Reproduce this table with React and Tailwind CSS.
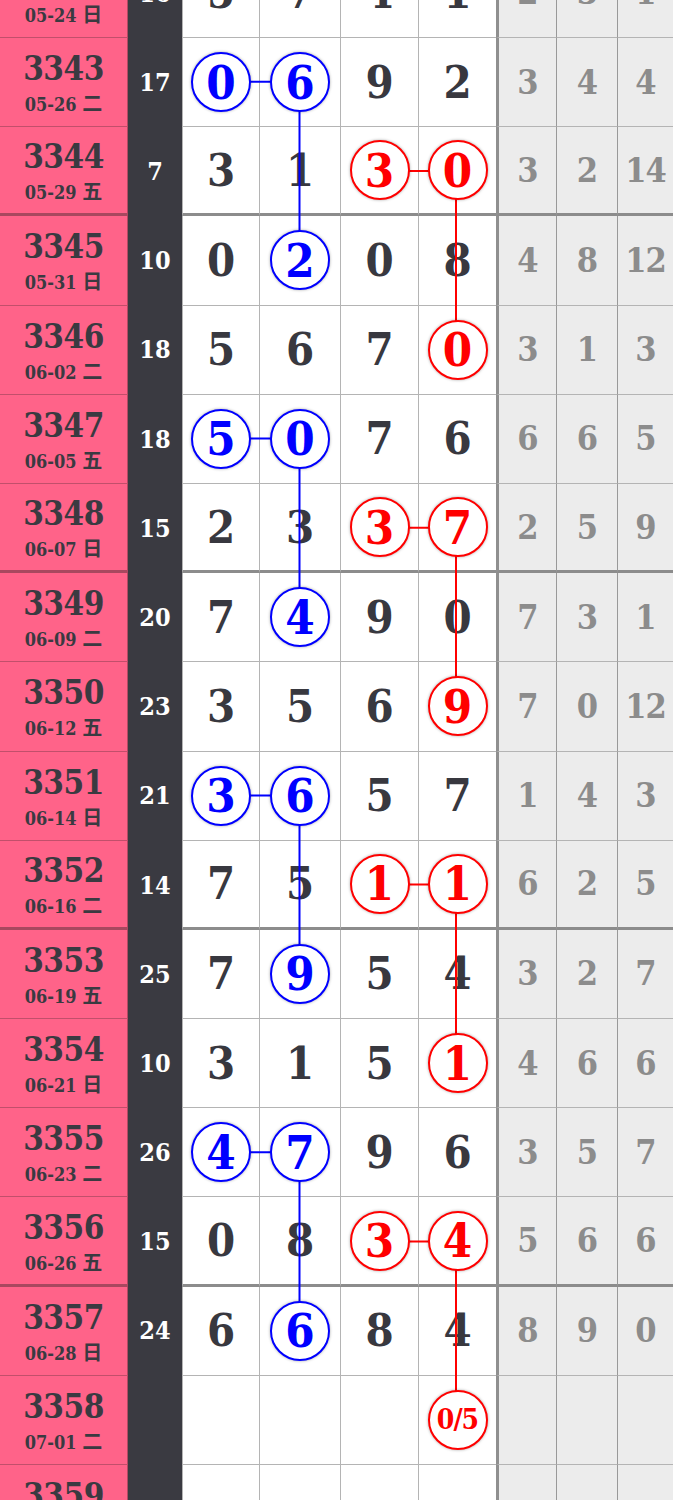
import React from 'react';

// one draw per row: issue, date, sum, four digits (b/r = circled), three gray counters
const rows = [
  { no: '3342', date: '05-24', wd: '日', sum: '16', d: ['5', '7', '4', '1'], g: ['2', '3', '1'] },
  { no: '3343', date: '05-26', wd: '二', sum: '17', d: ['0b', '6b', '9', '2'], g: ['3', '4', '4'] },
  { no: '3344', date: '05-29', wd: '五', sum: '7', d: ['3', '1', '3r', '0r'], g: ['3', '2', '14'], thick: true },
  { no: '3345', date: '05-31', wd: '日', sum: '10', d: ['0', '2b', '0', '8'], g: ['4', '8', '12'] },
  { no: '3346', date: '06-02', wd: '二', sum: '18', d: ['5', '6', '7', '0r'], g: ['3', '1', '3'] },
  { no: '3347', date: '06-05', wd: '五', sum: '18', d: ['5b', '0b', '7', '6'], g: ['6', '6', '5'] },
  { no: '3348', date: '06-07', wd: '日', sum: '15', d: ['2', '3', '3r', '7r'], g: ['2', '5', '9'], thick: true },
  { no: '3349', date: '06-09', wd: '二', sum: '20', d: ['7', '4b', '9', '0'], g: ['7', '3', '1'] },
  { no: '3350', date: '06-12', wd: '五', sum: '23', d: ['3', '5', '6', '9r'], g: ['7', '0', '12'] },
  { no: '3351', date: '06-14', wd: '日', sum: '21', d: ['3b', '6b', '5', '7'], g: ['1', '4', '3'] },
  { no: '3352', date: '06-16', wd: '二', sum: '14', d: ['7', '5', '1r', '1r'], g: ['6', '2', '5'], thick: true },
  { no: '3353', date: '06-19', wd: '五', sum: '25', d: ['7', '9b', '5', '4'], g: ['3', '2', '7'] },
  { no: '3354', date: '06-21', wd: '日', sum: '10', d: ['3', '1', '5', '1r'], g: ['4', '6', '6'] },
  { no: '3355', date: '06-23', wd: '二', sum: '26', d: ['4b', '7b', '9', '6'], g: ['3', '5', '7'] },
  { no: '3356', date: '06-26', wd: '五', sum: '15', d: ['0', '8', '3r', '4r'], g: ['5', '6', '6'], thick: true },
  { no: '3357', date: '06-28', wd: '日', sum: '24', d: ['6', '6b', '8', '4'], g: ['8', '9', '0'] },
  { no: '3358', date: '07-01', wd: '二', sum: '', d: ['', '', '', '0/5r'], g: ['', '', ''] },
  { no: '3359', date: '07-03', wd: '五', sum: '', d: ['', '', '', ''], g: ['', '', ''] },
];

const ROW_H = 89.2;
const COL_X = [220.5, 299.5, 378.5, 456];
const cellW = ['w-[77px]', 'w-[81px]', 'w-[78px]', 'w-[78px]'];
const grayW = ['w-[60px]', 'w-[61px]', 'flex-1'];

const Ball = ({ v }) => {
  const red = v.endsWith('r');
  const txt = v.slice(0, -1);
  return (
    <div
      className={`relative z-10 w-[60px] h-[60px] rounded-full bg-white border-[2.5px] flex items-center justify-center shadow-[0_0_3px_rgba(0,0,0,0.35)] ${
        red ? 'border-[#ff0000] text-[#ff0000]' : 'border-[#0000ff] text-[#0000ff]'
      }`}
    >
      <span
        className={
          txt.length > 1
            ? 'text-[28px] font-bold leading-none tracking-[-1px] [font-stretch:condensed]'
            : 'text-[47px] font-bold leading-none [font-stretch:semi-condensed]'
        }
      >
        {txt}
      </span>
    </div>
  );
};

const Row = ({ r }) => {
  const line = r.thick ? 'border-b-[3px] border-[#8c8c8c]' : 'border-b border-[#b4b4b4]';
  const pinkLine = r.thick ? 'border-b-[3px] border-[#a8485f]' : 'border-b border-[#c24f6b]';
  return (
    <div className="flex h-[89.2px]">
      <div className={`w-[128px] shrink-0 bg-[#ff6389] border-r border-r-[#b34a63] ${pinkLine} flex flex-col items-center justify-center text-[#3a3a41]`}>
        <div className="text-[33px] font-bold leading-none mt-[2px] tracking-[-0.5px] [font-stretch:condensed]">{r.no}</div>
        <div className="text-[18px] font-bold leading-none mt-[8px] [font-stretch:condensed]">
          {r.date} <span className="font-['Noto_Sans_CJK_SC',sans-serif] text-[20px]">{r.wd}</span>
        </div>
      </div>
      <div className="w-[54px] shrink-0 bg-[#3a3a41] flex items-center justify-center text-white text-[25px] font-bold [font-stretch:condensed]">
        {r.sum}
      </div>
      {r.d.map((v, i) => (
        <div
          key={i}
          className={`${cellW[i]} shrink-0 bg-white ${line} border-l border-l-[#b4b4b4] flex items-center justify-center text-[#38383f]`}
        >
          {v.endsWith('r') || v.endsWith('b') ? (
            <Ball v={v} />
          ) : (
            <span className="text-[45px] font-bold leading-none [font-stretch:semi-condensed]">{v}</span>
          )}
        </div>
      ))}
      {r.g.map((v, i) => (
        <div
          key={i}
          className={`${grayW[i]} shrink-0 bg-[#ececec] ${line} ${
            i === 0 ? 'border-l-[3px] border-l-[#8f8f8f]' : 'border-l border-l-[#999999]'
          } flex items-center justify-center text-[#8c8c8c] text-[34px] font-bold tracking-[-1px] [font-stretch:condensed]`}
        >
          {v}
        </div>
      ))}
    </div>
  );
};

export default function App() {
  const cy = (i) => i * ROW_H + ROW_H / 2 - 1;
  const segs = [];
  for (let g = 0; g < 4; g++) {
    const b = 1 + g * 4;
    segs.push({ x1: COL_X[0], y1: cy(b), x2: COL_X[1], y2: cy(b), c: '#0000ff' });
    segs.push({ x1: COL_X[1], y1: cy(b), x2: COL_X[1], y2: cy(b + 2), c: '#0000ff' });
    segs.push({ x1: COL_X[2], y1: cy(b + 1), x2: COL_X[3], y2: cy(b + 1), c: '#ff0000' });
    segs.push({ x1: COL_X[3], y1: cy(b + 1), x2: COL_X[3], y2: cy(b + 3), c: '#ff0000' });
  }

  return (
    <div className="h-[1500px] w-[673px] overflow-hidden bg-white font-['DejaVu_Serif','Noto_Sans_CJK_SC',serif]">
      <div className="relative mt-[-51.2px]">
        {rows.map((r) => (
          <Row key={r.no} r={r} />
        ))}
        <svg className="absolute left-0 top-0 z-[5] pointer-events-none" width="673" height={rows.length * ROW_H}>
          {segs.map((s, i) => (
            <line key={i} x1={s.x1} y1={s.y1} x2={s.x2} y2={s.y2} stroke={s.c} strokeWidth="2" />
          ))}
        </svg>
      </div>
    </div>
  );
}
